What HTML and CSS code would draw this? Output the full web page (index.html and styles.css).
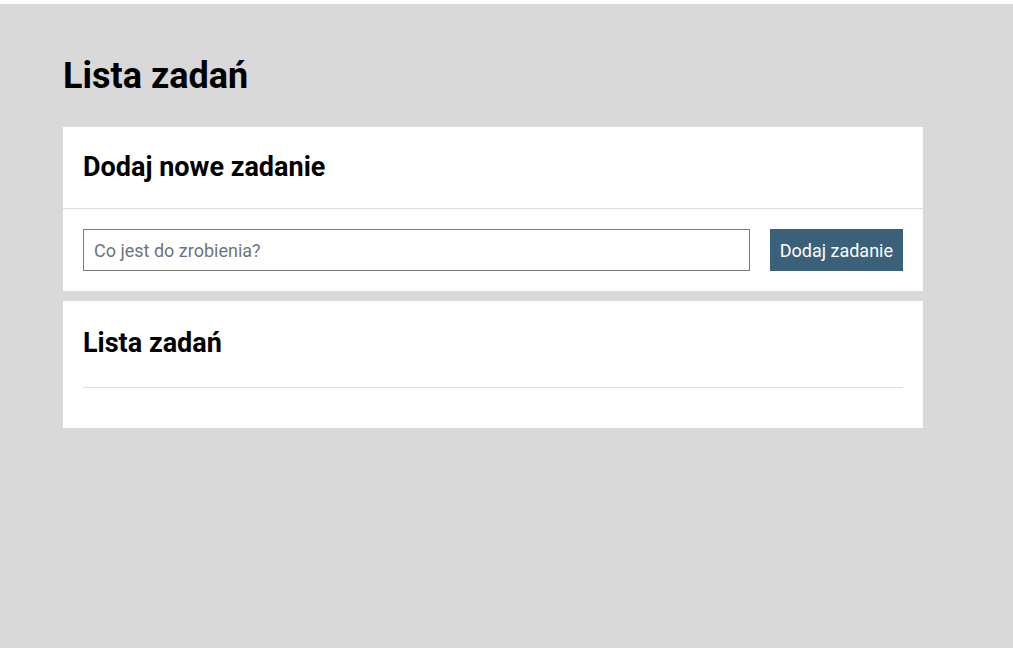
FILE: index.html
```html
<!DOCTYPE html>
<html lang="pl">
<head>
<meta charset="utf-8">
<title>Lista zadań</title>
<link rel="stylesheet" href="styles.css">
</head>
<body>
<div class="page">
  <h1 class="page-title">Lista zadań</h1>
  <section class="card">
    <div class="card-header">
      <h2 class="card-title">Dodaj nowe zadanie</h2>
    </div>
    <form class="card-body add-form">
      <input class="task-input" type="text" placeholder="Co jest do zrobienia?">
      <button class="add-btn" type="button">Dodaj zadanie</button>
    </form>
  </section>
  <section class="card list-card">
    <h2 class="card-title list-title">Lista zadań</h2>
    <ul class="task-list"></ul>
  </section>
</div>
</body>
</html>
```
FILE: styles.css
```css
html {
  background: #ffffff;
}
body {
  margin: 4px 0 0 0;
  min-height: 644px;
  background: #d9d9d9;
  font-family: Roboto, "Liberation Sans", sans-serif;
  color: #000;
}
.page {
  width: 860px;
  padding: 50px 0 0 63px;
}
.page-title {
  margin: 0 0 29px 0;
  font-size: 36px;
  line-height: 44px;
  font-weight: 700;
}
.card {
  background: #ffffff;
  margin-bottom: 10px;
}
.card-header {
  padding: 20px;
  border-bottom: 1px solid #dddddd;
}
.card-title {
  margin: 0;
  font-size: 27px;
  line-height: 41px;
  font-weight: 700;
}
.card-body {
  padding: 20px;
}
.add-form {
  display: flex;
  gap: 20px;
  margin: 0;
}
.task-input {
  flex: 1;
  height: 42px;
  box-sizing: border-box;
  border: 1px solid #7a7a7a;
  border-radius: 0;
  padding: 0 10px;
  font-family: Roboto, "Liberation Sans", sans-serif;
  font-size: 18px;
  color: #000;
  outline: none;
}
.task-input::placeholder {
  color: #6c757d;
}
.add-btn {
  height: 42px;
  padding: 0 10px;
  border: none;
  border-radius: 0;
  background: #3b6079;
  color: #ffffff;
  font-family: Roboto, "Liberation Sans", sans-serif;
  font-size: 18px;
}
.list-card {
  padding: 22px 20px 20px 20px;
}
.list-title {
  margin-bottom: 23px;
}
.task-list {
  list-style: none;
  margin: 0;
  padding: 0;
  min-height: 20px;
  border-top: 1px solid #dddddd;
}
```
